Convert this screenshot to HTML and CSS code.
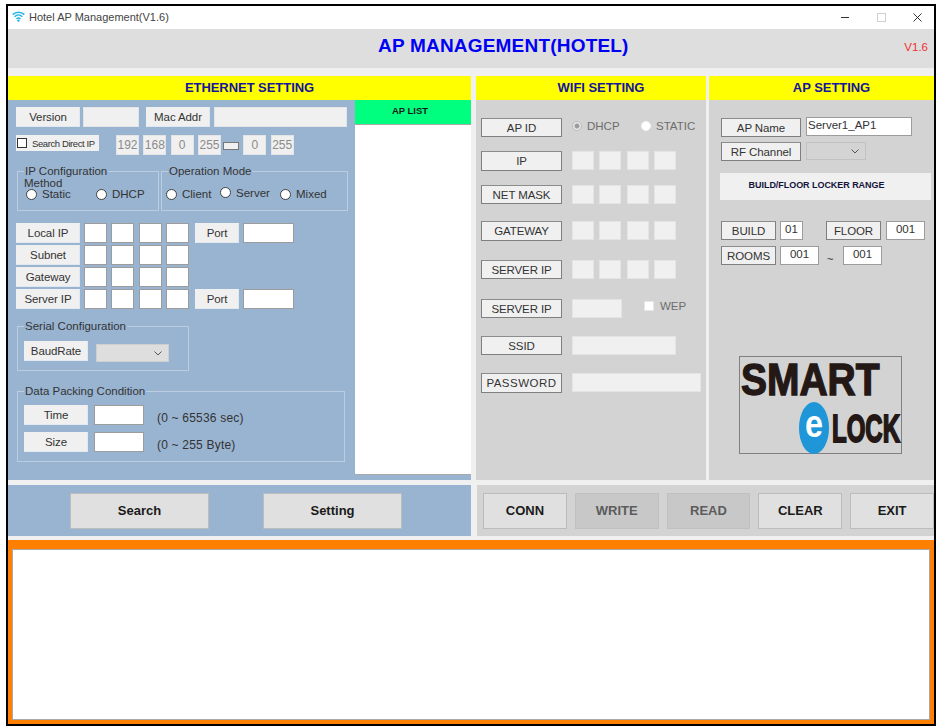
FILE: index.html
```html
<!DOCTYPE html>
<html lang="en">
<head>
<meta charset="utf-8">
<title>Hotel AP Management(V1.6)</title>
<link rel="stylesheet" href="styles.css">
</head>
<body>
<div class="window">
  <div class="titlebar">
    <svg class="wifi" width="13" height="11" viewBox="0 0 13 11"><g fill="none" stroke="#22b4ea" stroke-width="1.5"><path d="M.7 3.6C4 .3 9 .3 12.3 3.6"/><path d="M2.6 5.7C4.9 3.5 8.100 3.500 10.400 5.700"/><path d="M4.500 7.800C5.700 6.800 7.300 6.800 8.500 7.800"/></g><circle cx="6.500" cy="9.600" r="1.200" fill="#22b4ea"/></svg>
    <span class="title-text">Hotel AP Management(V1.6)</span>
    <div class="controls">
      <svg width="82" height="12" viewBox="0 0 82 12"><path d="M1 6.500H9" stroke="#333" fill="none"/><rect x="37.500" y="2.500" width="8" height="8" fill="none" stroke="#d0d0d0"/><path d="M73.500 2.500l8 8M81.500 2.500l-8 8" stroke="#333" fill="none"/></svg>
    </div>
  </div>
  <div class="header">
    <h1 class="app-title">AP MANAGEMENT(HOTEL)</h1>
    <span class="version">V1.6</span>
  </div>
  <div class="strip"></div>

  <div class="main">
    <section class="col col-eth">
      <h2 class="col-head">ETHERNET SETTING</h2>
      <div class="eth-body">
        <div class="eth-form">
          <div class="row">
            <div class="lbl w64 ml16">Version</div>
            <div class="box off w56 gap3"></div>
            <div class="lbl w64 gap7">Mac Addr</div>
            <div class="box off w133 gap4"></div>
          </div>
          <div class="row">
            <label class="search-direct ml16"><span class="check"></span><span>Search Direct IP</span></label>
            <div class="direct-ip">
              <div class="box off small muted">192</div>
              <div class="box off small muted">168</div>
              <div class="box off small muted">0</div>
              <div class="box off small muted">255</div>
              <div class="dash"></div>
              <div class="box off small muted">0</div>
              <div class="box off small muted">255</div>
            </div>
          </div>
          <div class="row modes">
            <fieldset class="fs fs-ip">
              <legend>IP Configuration</legend>
              <div class="method">Method</div>
              <div class="radios radios-ip">
                <label class="opt o70"><span class="radio"></span>Static</label>
                <label class="opt"><span class="radio"></span>DHCP</label>
              </div>
            </fieldset>
            <fieldset class="fs fs-op">
              <legend>Operation Mode</legend>
              <div class="radios radios-op">
                <label class="opt o54"><span class="radio"></span>Client</label>
                <label class="opt o60 raised"><span class="radio"></span>Server</label>
                <label class="opt"><span class="radio"></span>Mixed</label>
              </div>
            </fieldset>
          </div>
          <div class="row">
            <div class="lbl w64 ml16">Local IP</div>
            <div class="ip4"><div class="box"></div><div class="box"></div><div class="box"></div><div class="box"></div></div>
            <div class="lbl w44 gap6">Port</div>
            <div class="box w51 gap4"></div>
          </div>
          <div class="row">
            <div class="lbl w64 ml16">Subnet</div>
            <div class="ip4"><div class="box"></div><div class="box"></div><div class="box"></div><div class="box"></div></div>
          </div>
          <div class="row">
            <div class="lbl w64 ml16">Gateway</div>
            <div class="ip4"><div class="box"></div><div class="box"></div><div class="box"></div><div class="box"></div></div>
          </div>
          <div class="row">
            <div class="lbl w64 ml16">Server IP</div>
            <div class="ip4"><div class="box"></div><div class="box"></div><div class="box"></div><div class="box"></div></div>
            <div class="lbl w44 gap6">Port</div>
            <div class="box w51 gap4"></div>
          </div>
          <fieldset class="fs fs-serial">
            <legend>Serial Configuration</legend>
            <div class="serial-row">
              <div class="lbl w64">BaudRate</div>
              <div class="select sel-baud"><svg width="8" height="5" viewBox="0 0 8 5"><path d="M.5.5L4 4L7.500.5" fill="none" stroke="#555"/></svg></div>
            </div>
          </fieldset>
          <fieldset class="fs fs-data">
            <legend>Data Packing Condition</legend>
            <div class="data-row">
              <div class="lbl w64">Time</div>
              <div class="box w50 gap6"></div>
              <span class="hint">(0 ~ 65536 sec)</span>
            </div>
            <div class="data-row">
              <div class="lbl w64">Size</div>
              <div class="box w50 gap6"></div>
              <span class="hint">(0 ~ 255 Byte)</span>
            </div>
          </fieldset>
        </div>
        <aside class="ap-list">
          <div class="ap-list-head">AP LIST</div>
          <div class="ap-list-body"></div>
        </aside>
      </div>
    </section>

    <section class="col col-wifi">
      <h2 class="col-head">WIFI SETTING</h2>
      <div class="wifi-body">
        <div class="row">
          <div class="lbl dark w81">AP ID</div>
          <div class="wifi-radios">
            <label class="opt o69 disabled"><span class="radio dim"></span>DHCP</label>
            <label class="opt disabled"><span class="radio"></span>STATIC</label>
          </div>
        </div>
        <div class="row">
          <div class="lbl dark w81 tall">IP</div>
          <div class="ip4w"><div class="box off"></div><div class="box off"></div><div class="box off"></div><div class="box off"></div></div>
        </div>
        <div class="row">
          <div class="lbl dark w81">NET MASK</div>
          <div class="ip4w"><div class="box off"></div><div class="box off"></div><div class="box off"></div><div class="box off"></div></div>
        </div>
        <div class="row">
          <div class="lbl dark w81 tall">GATEWAY</div>
          <div class="ip4w"><div class="box off"></div><div class="box off"></div><div class="box off"></div><div class="box off"></div></div>
        </div>
        <div class="row">
          <div class="lbl dark w81">SERVER IP</div>
          <div class="ip4w"><div class="box off"></div><div class="box off"></div><div class="box off"></div><div class="box off"></div></div>
        </div>
        <div class="row">
          <div class="lbl dark w81">SERVER IP</div>
          <div class="box off w50 gap9"></div>
          <label class="wep disabled"><span class="check plain"></span>WEP</label>
        </div>
        <div class="row">
          <div class="lbl dark w81">SSID</div>
          <div class="box off w104 gap9"></div>
        </div>
        <div class="row">
          <div class="lbl dark w81 tall spaced">PASSWORD</div>
          <div class="box off w129 gap9"></div>
        </div>
      </div>
    </section>

    <section class="col col-ap">
      <h2 class="col-head">AP SETTING</h2>
      <div class="ap-body">
        <div class="row">
          <div class="lbl dark w80 nudge">AP Name</div>
          <div class="box w106 gap5 name-box">Server1_AP1</div>
        </div>
        <div class="row">
          <div class="lbl dark w80">RF Channel</div>
          <div class="select sel-rf gap5"><svg width="8" height="5" viewBox="0 0 8 5"><path d="M.5.5L4 4L7.500.5" fill="none" stroke="#555"/></svg></div>
        </div>
        <div class="range-bar">BUILD/FLOOR LOCKER RANGE</div>
        <div class="row">
          <div class="lbl dark w55">BUILD</div>
          <div class="box w23 gap4 top">01</div>
          <div class="lbl dark w55 gap23">FLOOR</div>
          <div class="box w39 gap5 top">001</div>
        </div>
        <div class="row">
          <div class="lbl dark w55">ROOMS</div>
          <div class="box w39 gap4 top">001</div>
          <span class="tilde">~</span>
          <div class="box w39 top">001</div>
        </div>
        <div class="logo">
          <svg width="161" height="96" viewBox="0 0 161 96">
            <text class="logo-word" transform="translate(1 37.500) scale(1 1.140)" font-size="39">SMART</text>
            <ellipse cx="74" cy="71" rx="15" ry="26" fill="#1e96d8"/>
            <text class="logo-e" transform="translate(65 80) scale(1.080 1.300)" font-size="30">e</text>
            <text class="logo-word" transform="translate(92 84.500) scale(1 1.620)" font-size="24">LOCK</text>
          </svg>
        </div>
      </div>
    </section>
  </div>

  <div class="actions">
    <div class="actions-left">
      <button class="btn btn-wide" type="button">Search</button>
      <button class="btn btn-wide" type="button">Setting</button>
    </div>
    <div class="actions-right">
      <button class="btn btn-cmd" type="button">CONN</button>
      <button class="btn btn-cmd is-off" type="button">WRITE</button>
      <button class="btn btn-cmd is-off" type="button">READ</button>
      <button class="btn btn-cmd" type="button">CLEAR</button>
      <button class="btn btn-cmd" type="button">EXIT</button>
    </div>
  </div>

  <div class="log-frame"><div class="log"></div></div>
</div>
</body>
</html>
```

FILE: styles.css
```css
* { box-sizing: border-box; }
html, body { margin: 0; padding: 0; background: #fff; }
body {
  width: 943px;
  height: 728px;
  overflow: hidden;
  font-family: "Liberation Sans", Arial, sans-serif;
  font-size: 11.5px;
  color: #333;
}
h1, h2 { margin: 0; }
fieldset { margin: 0; min-width: 0; }

.window {
  width: 930px;
  height: 722px;
  margin: 4px 0 0 6px;
  border: 2px solid #000;
  background: #f0f0f0;
  display: flex;
  flex-direction: column;
}

.titlebar {
  height: 23px;
  flex: none;
  background: #fff;
  display: flex;
  align-items: center;
  padding: 0 0 2px 4px;
}
.wifi { margin-right: 4px; }
.title-text { font-size: 11px; color: #444; }
.controls { margin-left: auto; padding-right: 12px; display: flex; }

.header {
  height: 39px;
  flex: none;
  background: #dedede;
  display: flex;
  align-items: center;
  padding-bottom: 5px;
}
.app-title {
  margin-left: 370px;
  font-size: 19px;
  font-weight: bold;
  color: #0000f5;
  letter-spacing: .2px;
}
.version { margin-left: auto; margin-right: 6px; margin-top: 2px; font-size: 11.5px; color: #f03030; }
.strip { height: 8px; flex: none; }

.main { display: flex; height: 404px; flex: none; }
.col { display: flex; flex-direction: column; }
.col-eth { width: 463px; }
.col-wifi { width: 230px; margin-left: 5px; }
.col-ap { width: 225px; margin-left: 3px; }
.col-head {
  height: 24px;
  flex: none;
  background: #ff0;
  color: #14149c;
  font-size: 13px;
  font-weight: bold;
  text-align: center;
  line-height: 24px;
  padding-left: 20px;
  letter-spacing: -.05px;
}

.row { display: flex; align-items: flex-start; }
.ml16 { margin-left: 8px; }
.gap3 { margin-left: 3px; }
.gap4 { margin-left: 4px; }
.gap5 { margin-left: 5px; }
.gap6 { margin-left: 6px; }
.gap7 { margin-left: 7px; }
.gap9 { margin-left: 10px; }
.gap23 { margin-left: 23px; }
.w23 { width: 23px; }
.w39 { width: 39px; }
.w44 { width: 44px; }
.w50 { width: 50px; }
.w51 { width: 51px; }
.w55 { width: 55px; }
.w56 { width: 56px; }
.w64 { width: 64px; }
.w80 { width: 80px; }
.w81 { width: 81px; }
.w104 { width: 104px; }
.w106 { width: 106px; }
.w129 { width: 129px; }
.w133 { width: 133px; }

.lbl {
  height: 20px;
  flex: none;
  display: flex;
  align-items: center;
  justify-content: center;
  background: #f0f0f0;
  border: 1px solid #f0f0f0;
  border-right-color: #e2e8f0;
  border-bottom-color: #e2e8f0;
  white-space: nowrap;
  letter-spacing: -.1px;
}
.lbl.dark {
  height: 19px;
  border: 1px solid #7f7f7f;
  border-top-color: #8c8c8c;
}
.lbl.dark.tall { height: 20px; }
.lbl.nudge { margin-top: 1px; }
.lbl.spaced { letter-spacing: .5px; }

.box {
  flex: none;
  height: 20px;
  background: #fff;
  border: 1px solid #9c9c9c;
  display: flex;
  align-items: center;
  justify-content: center;
}
.box.off { background: #f0f0f0; border-color: #e4e4e4; }
.box.small { width: 23px; }
.box.muted { color: #8b8b8b; font-size: 12px; overflow: hidden; }
.box.top { align-items: flex-start; line-height: 15px; font-size: 11.5px; }

.eth-body { flex: 1; display: flex; background: #99b4d1; }
.eth-form {
  width: 347px;
  flex: none;
  display: grid;
  grid-template-rows: 28px 29px 59px 22px 22px 22px 31px 65px 1fr;
  padding-top: 7px;
  align-items: start;
}
.search-direct {
  width: 83px;
  height: 16px;
  background: #f0f0f0;
  display: flex;
  align-items: center;
  padding-left: 1px;
  font-size: 9.5px;
  letter-spacing: -.4px;
  white-space: nowrap;
}
.check {
  width: 10px;
  height: 10px;
  flex: none;
  background: #fff;
  border: 1px solid #333;
  margin-right: 5px;
}
.check.plain { border-color: #e6e6e6; margin-right: 6px; }
.direct-ip { display: flex; align-items: flex-start; margin-left: 17px; gap: 4.33px; }
.dash {
  width: 16px;
  height: 8px;
  margin-top: 7px;
  margin-left: -2.33px;
  background: #f0f0f0;
  border: 1px solid #777;
}

.modes { align-items: flex-start; }
.fs {
  border: 1px solid #bccde1;
  padding: 0;
  color: #333;
}
.fs legend {
  margin-left: 6px;
  padding: 0 1px;
  line-height: 12px;
  font-size: 11.5px;
  white-space: nowrap;
}
.fs-ip legend, .fs-op legend { margin-top: -1px; }
.fs-ip { margin-left: 9px; width: 142px; height: 46px; margin-top: 1px; }
.fs-op { margin-left: 2px; width: 187px; height: 46px; margin-top: 1px; }
.method { margin: 0 0 -1px 6px; line-height: 12px; }
.radios { display: flex; align-items: center; height: 12px; }
.radios-ip { padding-left: 8px; }
.radios-op { padding-left: 4px; margin-top: 11px; }
.opt { display: flex; align-items: center; white-space: nowrap; }
.opt .radio { margin-right: 5px; }
.o54 { width: 54px; }
.o60 { width: 60px; }
.o69 { width: 69px; }
.o70 { width: 70px; }
.raised { margin-top: -3px; }
.radio {
  width: 11px;
  height: 11px;
  flex: none;
  border-radius: 50%;
  background: #fff;
  border: 1px solid #404040;
}
.radio.dim { border-color: #bdbdbd; background: radial-gradient(circle, #9c9c9c 0 2px, #e8e8e8 3px); }
.disabled { color: #6d6d6d; }
.disabled .radio:not(.dim) { border-color: #f4f4f4; }
.disabled .radio { width: 10px; height: 10px; }

.ip4 {
  display: grid;
  grid-template-columns: repeat(4, 23px);
  column-gap: 4.33px;
  margin-left: 4px;
}
.fs-serial { margin-left: 9px; width: 172px; height: 51px; grid-row: 8; }
.serial-row { display: flex; align-items: flex-start; padding: 0 0 0 6px; margin-top: 9px; }
.select {
  height: 18px;
  flex: none;
  background: #dedede;
  border: 1px solid #cfcfcf;
  display: flex;
  align-items: center;
  justify-content: flex-end;
  padding-right: 6px;
}
.sel-baud { width: 73px; margin-left: 8px; margin-top: 3px; }
.sel-rf { width: 60px; background: #d4d4d4; border-color: #c2c2c2; }
.fs-data { margin-left: 9px; width: 328px; height: 77px; padding: 8px 0 0 6px; }
.fs-data legend { margin-left: 0; }
.data-row { display: flex; align-items: flex-start; margin-bottom: 7px; height: 20px; }
.hint { margin-left: 13px; margin-top: 6px; font-size: 12px; letter-spacing: .2px; }

.ap-list { width: 116px; flex: none; display: flex; flex-direction: column; height: 375px; }
.ap-list-head {
  height: 24px;
  flex: none;
  background: #00ff7f;
  color: #1a1a1a;
  font-size: 9.5px;
  font-weight: bold;
  text-align: center;
  line-height: 22px;
  padding-right: 6px;
}
.ap-list-body { flex: 1; background: #fff; border-top: 1px solid #a9a9a9; border-bottom: 1px solid #a9a9a9; }

.wifi-body {
  flex: 1;
  background: #d3d3d3;
  padding: 18px 0 0 5px;
  display: grid;
  grid-template-rows: 33px 34px 36px 39px 39px 37px 37px 1fr;
  align-items: start;
}
.wifi-radios { display: flex; margin-left: 10px; margin-top: 1px; height: 14px; align-items: center; }
.ip4w {
  display: grid;
  grid-template-columns: repeat(4, 22px);
  column-gap: 5.33px;
  margin-left: 10px;
}
.ip4w .box { height: 19px; }
.wep { display: flex; align-items: center; margin-left: 22px; margin-top: 2px; height: 10px; }
.wifi-body > .row > .box { height: 19px; }

.ap-body {
  flex: 1;
  background: #d3d3d3;
  padding: 17px 0 0 12px;
  display: grid;
  grid-template-rows: 25px 31px 48px 25px 110px 1fr;
  align-items: start;
}
.name-box { justify-content: flex-start; align-items: flex-start; padding-left: 1px; line-height: 15px; height: 19px; font-size: 11.5px; }
.range-bar {
  width: 211px;
  height: 27px;
  margin-left: -1px;
  background: #f0f0f0;
  color: #14143c;
  font-size: 9px;
  font-weight: bold;
  line-height: 25px;
  text-align: center;
  padding-right: 18px;
  letter-spacing: -.05px;
}
.ap-body .row .box { height: 19px; }
.tilde { width: 24px; text-align: center; margin-top: 7px; padding-right: 2px; }
.logo {
  width: 163px;
  height: 98px;
  margin-left: 18px;
  border: 1px solid #808080;
}
.logo svg { display: block; overflow: visible; }
.logo-word {
  font-family: "Liberation Sans", Arial, sans-serif;
  font-weight: bold;
  fill: #231815;
  stroke: #231815;
  stroke-width: 1.2;
}
.logo-e {
  font-family: "Liberation Sans", Arial, sans-serif;
  font-weight: bold;
  fill: #fff;
}

.actions { display: flex; margin-top: 5px; height: 51px; flex: none; }
.actions-left {
  width: 463px;
  background: #99b4d1;
  display: flex;
  gap: 54px;
  padding: 8px 0 0 62px;
}
.actions-right {
  width: 457px;
  margin-left: 6px;
  background: #d3d3d3;
  display: flex;
  gap: 8px;
  padding: 8px 0 0 6px;
}
.btn {
  height: 36px;
  background: #e0e0e0;
  border: 1px solid #bcbcbc;
  font-family: "Liberation Sans", Arial, sans-serif;
  font-size: 13px;
  font-weight: bold;
  color: #1a1a1a;
  padding: 0 0 2px;
}
.btn-wide { width: 139px; }
.btn-cmd { width: 84px; }
.btn.is-off { background: #c8c8c8; border-color: #c0c0c0; color: #5c5c5c; }

.log-frame {
  margin-top: 4px;
  flex: 1;
  background: #ff8000;
  padding: 9px 4px 4px 4px;
}
.log {
  height: 100%;
  background: #fff;
  border: 1px solid #a9a9a9;
}
```
